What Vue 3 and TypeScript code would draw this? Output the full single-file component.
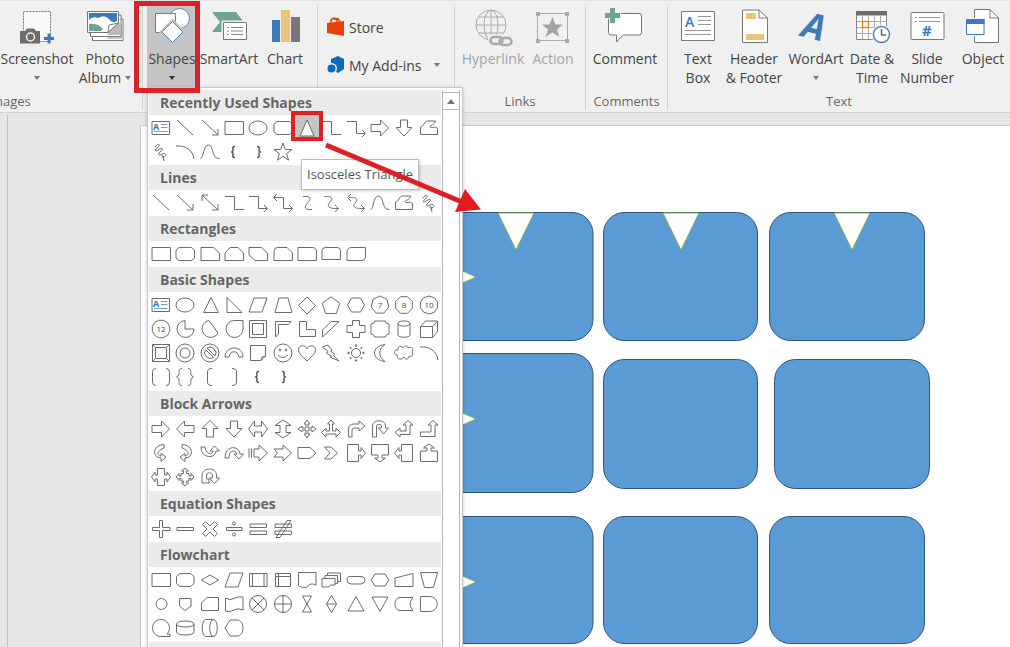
<script setup lang="ts">
interface Shape {
  name: string
  d: string
  text?: string
  kind?: 'textbox' | 'active' | 'heavy'
}
interface Section {
  title: string
  shapes: Shape[]
}
interface Tri {
  points: string
}
interface Card {
  x: number
  y: number
  w: number
  h: number
}

const circle = (x: number, y: number, r: number): string =>
  `M${x - r} ${y}a${r} ${r} 0 1 0 ${2 * r} 0a${r} ${r} 0 1 0 ${-2 * r} 0Z`
const oval = (x: number, y: number, rx: number, ry: number): string =>
  `M${x - rx} ${y}a${rx} ${ry} 0 1 0 ${2 * rx} 0a${rx} ${ry} 0 1 0 ${-2 * rx} 0Z`
const poly = (n: number, r: number, rot = -90, cx = 12, cy = 12): string =>
  'M' +
  Array.from({ length: n }, (_, i) => {
    const a = ((rot + (360 / n) * i) * Math.PI) / 180
    return `${(cx + r * Math.cos(a)).toFixed(2)} ${(cy + r * Math.sin(a)).toFixed(2)}`
  }).join('L') +
  'Z'
const star = (n: number, r: number, inner: number, cy = 12): string =>
  'M' +
  Array.from({ length: n * 2 }, (_, i) => {
    const a = ((-90 + (180 / n) * i) * Math.PI) / 180
    const q = i % 2 ? inner : r
    return `${(12 + q * Math.cos(a)).toFixed(2)} ${(cy + q * Math.sin(a)).toFixed(2)}`
  }).join('L') +
  'Z'
const s = (name: string, d: string, text?: string): Shape => ({ name, d, text })

const textBox: Shape = { name: 'Text Box', d: 'M3 5.500H20.500V18.500H3Z', kind: 'textbox' }
const line = s('Line', 'M4 4L20 19')
const arrow = s('Arrow', 'M4 4L20 19M20 13V19H14')
const rect = s('Rectangle', 'M3 5.500H21.500V18.500H3Z')
const ellipse = s('Oval', oval(12, 12, 9, 7))
const round = s('Rounded Rectangle', 'M6 5.500H18.500L21.500 8V16L18.500 18.500H6L3 16V8Z')
const elbow = s('Elbow Connector', 'M3 5.500H12.500V18.500H22')
const elbowArrow = s('Elbow Arrow Connector', 'M3 5.500H12.500V17.500H21M18 14L21.500 17.500L18 21')
const freeform = s('Freeform', 'M3.500 18.500V11C7 11 7 5 10.500 5H18.500C18 9 13 9 13 11C14 13 20.500 9 20.500 13V18.500Z')
const scribble = s('Scribble', 'M6 7C9 3 12 4 9 7C5 11 6 12 9 10C14 7 15 9 11 12C8 15 10 16 13 14C17 12 18 16 15 17C12 18 13 14 14 16L15 21')
const arc = s('Arc', 'M3 6C12 5 20 10 21 19')
const curve = s('Curve', 'M2.500 18.500C6 18 5 5 10.500 5S13 19 21.500 18.500')
const leftBrace: Shape = {
  name: 'Left Brace',
  d: 'M13 6.500C10 6.500 11 8 11 10S10.500 12 9 12C10.500 12 11 12 11 14S10 17.500 13 17.500',
  kind: 'heavy',
}
const rightBrace: Shape = {
  name: 'Right Brace',
  d: 'M11 6.500C14 6.500 13 8 13 10S13.500 12 15 12C13.500 12 13 12 13 14S14 17.500 11 17.500',
  kind: 'heavy',
}
const rightArrow = s('Right Arrow', 'M3 8.500H12.500V4L20.500 12L12.500 20V15.500H3Z')
const downArrow = s('Down Arrow', 'M8.500 4V11.500H4L12 20L20 11.500H15.500V4Z')
const parallelogram = s('Parallelogram', 'M8 5H21L16 19H3Z')

const sections: Section[] = [
  {
    title: 'Recently Used Shapes',
    shapes: [
      textBox, line, arrow, rect, ellipse, round,
      { name: 'Isosceles Triangle', d: 'M12 4L19 20H5Z', kind: 'active' },
      elbow, elbowArrow, rightArrow, downArrow, freeform,
      scribble, arc, curve, leftBrace, rightBrace,
      s('5-Point Star', star(5, 9.5, 3.8, 12.5)),
    ],
  },
  {
    title: 'Lines',
    shapes: [
      line, arrow,
      s('Double Arrow', 'M4 4L20 19M20 13V19H14M4 10V4H10'),
      elbow, elbowArrow,
      s('Elbow Double-Arrow', 'M3 6.500H12.500V17.500H21M18 14L21.500 17.500L18 21M6 3L2.500 6.500L6 10'),
      s('Curved Connector', 'M8 5.500C17 5 16 8 12.500 12S9 19 17 18.500'),
      s('Curved Arrow Connector', 'M5 5.500C14 5 14 8 11 11S8 18 19 17.500M16 14L19.500 17.500L16 21'),
      s('Curved Double-Arrow', 'M5 6.500C14 6 14 9 11 12S10 18 20 17.500M17 14L20.500 17.500L17 21M7 3L3.500 6.500L7 10'),
      curve, freeform, scribble,
    ],
  },
  {
    title: 'Rectangles',
    shapes: [
      rect, round,
      s('Snip Single Corner', 'M3 5.500H15.500L21.500 11V18.500H3Z'),
      s('Snip Same Side', 'M8 5.500H16L21.500 11V18.500H3V11Z'),
      s('Snip Diagonal', 'M3 5.500H15.500L21.500 11V18.500H9L3 13Z'),
      s('Snip and Round', 'M3 18.500V9Q3 5.500 7 5.500H16L21.500 11V18.500Z'),
      s('Round Single Corner', 'M3 5.500H17Q21.500 5.500 21.500 10V18.500H3Z'),
      s('Round Same Side', 'M3 17.500V8.500Q3 5.500 7 5.500H18Q21.500 5.500 21.500 8.500V17.500Z'),
      s('Round Diagonal', 'M3 18.500V10Q3 5.500 8 5.500H21.500V14Q21.500 18.500 17 18.500Z'),
    ],
  },
  {
    title: 'Basic Shapes',
    shapes: [
      textBox, ellipse,
      s('Triangle', 'M13 4.500L20.500 19.500H5.500Z'),
      s('Right Triangle', 'M5 4.500V19.500H20Z'),
      parallelogram,
      s('Trapezoid', 'M8 5H17L21 19.500H4Z'),
      s('Diamond', 'M12 4L20.500 12.500L12 21L3.500 12.500Z'),
      s('Pentagon', poly(5, 9.2, -90, 12, 13)),
      s('Hexagon', 'M7.500 5H16.500L20.500 12L16.500 19H7.500L3.500 12Z'),
      s('Heptagon', poly(7, 9), '7'),
      s('Octagon', poly(8, 9, 22.5), '8'),
      s('Decagon', poly(10, 9), '10'),
      s('Dodecagon', poly(12, 9, 15), '12'),
      s('Pie', 'M12 3.500A8.500 8.500 0 1 0 21 12H12Z'),
      s('Chord', 'M11 3.500A8.500 8.500 0 1 0 20 16Z'),
      s('Teardrop', 'M21 3.500H12A8.500 8.500 0 1 0 21 12Z'),
      s('Frame', 'M3.500 3.500H20.500V20.500H3.500ZM6.500 6.500H17.500V17.500H6.500Z'),
      s('Half Frame', 'M4.500 4.500H20L17.500 7.500H7.500V17L4.500 20Z'),
      s('L-Shape', 'M4.500 4.500H11.500V12.500H20.500V19.500H4.500Z'),
      s('Diagonal Stripe', 'M3.500 13L12 4.500H20L3.500 20Z'),
      s('Cross', 'M8.500 3.500H15.500V8.500H21V15.500H15.500V20.500H8.500V15.500H3V8.500H8.500Z'),
      s('Plaque', 'M6.500 4H17.500Q17.500 7 21 7V17Q17.500 17 17.500 20H6.500Q6.500 17 3 17V7Q6.500 7 6.500 4Z'),
      s('Can', 'M6 6.500V18C6 21 18 21 18 18V6.500M6 6.500C6 3 18 3 18 6.500S6 10 6 6.500'),
      s('Cube', 'M3.500 9.500L8.500 4H20.500V14.500L15.500 20.500H3.500ZM3.500 9.500H15.500V20.500M15.500 9.500L20.500 4'),
      s('Bevel', 'M3.500 3.500H20.500V20.500H3.500ZM6.500 6.500H17.500V17.500H6.500ZM3.500 3.500L6.500 6.500M20.500 3.500L17.500 6.500M3.500 20.500L6.500 17.500M20.500 20.500L17.500 17.500'),
      s('Donut', circle(12, 12, 9) + circle(12, 12, 5)),
      s('No Symbol', circle(12, 12, 9) + 'M7.500 8.500L15.500 16.500A5.800 5.800 0 0 1 7.500 8.500ZM9 7L17 15A5.800 5.800 0 0 0 9 7Z'),
      s('Block Arc', 'M3 16C3 4 21 4 21 16H17C16 9 8 9 7 16Z'),
      s('Folded Corner', 'M4.500 4.500H19.500V15L15 19.500H4.500ZM15 19.500L16 16L19.500 15'),
      s('Smiley Face', circle(12, 12, 9) + circle(9, 9, 1) + circle(15, 9, 1) + 'M7 14Q12 19 17 14'),
      s('Heart', 'M12 20C7 15 3.500 13 3.500 8.500C4 3 11 4 12 8C13 4 20 3 20.500 8.500C20.500 13 17 15 12 20Z'),
      s('Lightning Bolt', 'M3.500 6L9 4L13 9L11.500 10L16 13.500L14.500 14.500L20 20L11 16L12.500 15L7.500 12L9 10.500Z'),
      s('Sun', circle(12, 12, 4.5) + 'M11 5L12 3.500L13 5ZM11 19L12 20.500L13 19ZM5 11L3.500 12L5 13ZM19 11L20.500 12L19 13ZM6 6.500L6.500 8M6 6.500L7.500 7M18 6.500L17.500 8M18 6.500L16.500 7M6 17.500L6.500 16M6 17.500L7.500 17M18 17.500L17.500 16M18 17.500L16.500 17'),
      s('Moon', 'M17 3.500C3 5 3 19 17 20.500C10 16 10 8 17 3.500Z'),
      s('Cloud', 'M5 14C1 13 2 8 6 9C5 5 10 4 11 7C13 4 15 4 16 7C20 5 22 8 20 11C22 14 19 17 17 15C17 19 13 19 12 16C9 20 5 18 5 14Z'),
      arc,
      s('Double Bracket', 'M7 3.500Q3.500 3.500 3.500 7V17Q3.500 20.500 7 20.500M17 3.500Q20.500 3.500 20.500 7V17Q20.500 20.500 17 20.500'),
      s('Double Brace', 'M9 3.500C5 3.500 6.500 7 6 10L3.500 12L6 14C6.500 17 5 20.500 9 20.500M15 3.500C19 3.500 17.500 7 18 10L20.500 12L18 14C17.500 17 19 20.500 15 20.500'),
      s('Left Bracket', 'M14 3.500Q9.500 3.500 9.500 7V17Q9.500 20.500 14 20.500'),
      s('Right Bracket', 'M10 3.500Q14.500 3.500 14.500 7V17Q14.500 20.500 10 20.500'),
      leftBrace, rightBrace,
    ],
  },
  {
    title: 'Block Arrows',
    shapes: [
      rightArrow,
      s('Left Arrow', 'M21 8.500H11.500V4L3.500 12L11.500 20V15.500H21Z'),
      s('Up Arrow', 'M8.500 20V11.500H4L12 3.500L20 11.500H15.500V20Z'),
      downArrow,
      s('Left-Right Arrow', 'M2.500 12L8.500 4V9H15.500V4L21.500 12L15.500 20V15H8.500V20Z'),
      s('Up-Down Arrow', 'M12 3L20 8.500H15V15.500H20L12 21L4 15.500H9V8.500H4Z'),
      s('Quad Arrow', 'M12 3L15 7H13V11H17V9L21 12L17 15V13H13V17H15L12 21L9 17H11V13H7V15L3 12L7 9V11H11V7H9Z'),
      s('Left-Right-Up Arrow', 'M12 3L15.500 7H13.500V14H17V11L21.500 15.500L17 20V17H7V20L2.500 15.500L7 11V14H10.500V7H8.500Z'),
      s('Bent Arrow', 'M4.500 20V12Q4.500 7 10 7H15V4L21 9L15 14V11H10Q8 11 8 13V20Z'),
      s('U-Turn Arrow', 'M4.500 20V9C4.500 2 17.500 2 17.500 9V11H20.500L15.500 17L10.500 11H13.500V9C13.500 7 8.500 7 8.500 9V20Z'),
      s('Left-Up Arrow', 'M3 15.500L8 11V14H14V8H11L16 3.500L21 8H18V17.500H8V20Z'),
      s('Bent-Up Arrow', 'M3.500 15H14V8H11L16 3.500L21 8H18V19.500H3.500Z'),
      s('Curved Right Arrow', 'M15 3.500C3 4 3 17 12 17V20.500L17 16L12 12.500V15C8 15 7 10 15 7Z'),
      s('Curved Left Arrow', 'M9 3.500C21 4 21 17 12 17V20.500L7 16L12 12.500V15C16 15 17 10 9 7Z'),
      s('Curved Up Arrow', 'M3 6C3 18 18 18 18 10H21.500L16.500 5L12 10H15C15 14 8 14 7 6Z'),
      s('Curved Down Arrow', 'M3 17C3 4 17 4 18 13H21.500L17 18L12 13H15C14 9 7 8 7 17Z'),
      s('Striped Right Arrow', 'M3 7.500V16.500M5.500 7.500V16.500M8 8H13V4L21.500 12L13 20V16H8Z'),
      s('Notched Right Arrow', 'M3 8H12V4L20.500 12L12 20V16H3L6.500 12Z'),
      s('Pentagon Arrow', 'M3 6.500H15L21 12L15 17.500H3Z'),
      s('Chevron', 'M5.500 6H12L18.500 12L12 18H5.500L11 12Z'),
      s('Right Arrow Callout', 'M3.500 3.500H14.500V10H17V6.500L21.500 12L17 17.500V14H14.500V20.500H3.500Z'),
      s('Down Arrow Callout', 'M3.500 3.500H20.500V14H14V17H17.500L12 21L6.500 17H10V14H3.500Z'),
      s('Left Arrow Callout', 'M20.500 3.500H9.500V10H7V6.500L2.500 12L7 17.500V14H9.500V20.500H20.500Z'),
      s('Up Arrow Callout', 'M3.500 20.500H20.500V10H14V7H17.500L12 3L6.500 7H10V10H3.500Z'),
      s('Left-Right Callout', 'M8.500 3.500H15.500V10H18V7L21.500 12L18 17V14H15.500V20.500H8.500V14H6V17L2.500 12L6 7V10H8.500Z'),
      s('Quad Arrow Callout', 'M12 3L15.500 6H13.500V8.500H16V11H18V8.500L21 12L18 15.500V13.500H16V16H13.500V18H15.500L12 21L8.500 18H10.500V16H8V13.500H6V15.500L3 12L6 8.500V11H8V8.500H10.500V6H8.500Z'),
      s('Circular Arrow', 'M4 18V10C5 2 18 2 18.500 10V13H21.500L16.500 18.500L11.500 13H14.500V10C14 7 9 7 8.500 10V14H11V18Z'),
    ],
  },
  {
    title: 'Equation Shapes',
    shapes: [
      s('Plus', 'M10.500 3.500H13.500V10.500H21V13.500H13.500V20.500H10.500V13.500H3.500V10.500H10.500Z'),
      s('Minus', 'M4 10.500H20.500V13.500H4Z'),
      s('Multiply', 'M4.500 7.500L7.500 4.500L12 9L16.500 4.500L19.500 7.500L15 12L19.500 16.500L16.500 19.500L12 15L7.500 19.500L4.500 16.500L9 12Z'),
      s('Division', 'M4.500 10.500H20V13.500H4.500Z' + circle(12, 6.5, 1.5) + circle(12, 17.5, 1.5)),
      s('Equal', 'M4 7H20.500V10.500H4ZM4 14H20.500V17.500H4Z'),
      s('Not Equal', 'M4 7H20.500V10.500H4ZM4 14H20.500V17.500H4ZM16 3.500H20L9 20.500H5Z'),
    ],
  },
  {
    title: 'Flowchart',
    shapes: [
      rect,
      s('Alternate Process', 'M7 5.500H17.500L21 8.500V15.500L17.500 18.500H7L3.500 15.500V8.500Z'),
      s('Decision', 'M12 7L20.500 12L12 17L3.500 12Z'),
      parallelogram,
      s('Predefined Process', 'M3.500 5.500H21V18.500H3.500ZM6.500 5.500V18.500M18 5.500V18.500'),
      s('Internal Storage', 'M4.500 5.500H19.500V18.500H4.500ZM7.500 5.500V18.500M4.500 8.500H19.500'),
      s('Document', 'M3.500 4.500H21V17Q15 14 12 19Q9 21 3.500 17.500Z'),
      s('Multidocument', 'M3 10.500H16V17Q11 16 9 19H3ZM6 10.500V7.500H18.500V15.500H16M8.500 7.500V5H21.500V13.500H18.500'),
      s('Terminator', 'M7 8.500H17Q21 8.500 21 12T17 16H7Q3 16 3 12T7 8.500Z'),
      s('Preparation', 'M7 6H17L21 12L17 18H7L3 12Z'),
      s('Manual Input', 'M3 10L21 5.500V18.500H3Z'),
      s('Manual Operation', 'M3.500 4.500H20.500L16.500 19.500H7.500Z'),
      s('Connector', circle(12.5, 12, 5.5)),
      s('Off-page Connector', 'M6.500 6.500H18V14L12 18.500L6.500 14Z'),
      s('Card', 'M3.500 11L9 5.500H20.500V18.500H3.500Z'),
      s('Punched Tape', 'M3.500 6Q8 9 12 6.500T21 5V18Q16 15.500 12 18T3.500 19Z'),
      s('Summing Junction', circle(12, 12, 8.5) + 'M6 6L18 18M18 6L6 18'),
      s('Or', circle(12, 12, 8.5) + 'M12 3.500V20.500M3.500 12H20.500'),
      s('Collate', 'M7.500 4H16.500L7.500 20H16.500Z'),
      s('Sort', 'M12.500 3.500L17.500 12L12.500 20.500L7.500 12ZM7.500 12H17.500'),
      s('Extract', 'M12 4.500L20 19H4Z'),
      s('Merge', 'M4 5H20L12 19.500Z'),
      s('Stored Data', 'M8 5.500H21Q15 12 21 18.500H8Q3 18 3 12T8 5.500Z'),
      s('Delay', 'M3.500 4.500H12C23 4.500 23 19.500 12 19.500H3.500Z'),
      s('Sequential Access', 'M12 20.500H21V18H18A8.500 8.500 0 1 0 12 20.500Z'),
      s('Magnetic Disk', 'M3.500 8V16C3.500 20 21 20 21 16V8M3.500 8C3.500 4 21 4 21 8S3.500 12 3.500 8'),
      s('Direct Access', 'M8 3.500H15.500C20.500 3.500 20.500 20.500 15.500 20.500H8C3 20.500 3 3.500 8 3.500M15.500 3.500C10.500 3.500 10.500 20.500 15.500 20.500'),
      s('Display', 'M3 12L8 4H15C23 4 23 20 15 20H8Z'),
    ],
  },
]

const cards: Card[] = [
  { x: 438, y: 212.5, w: 155, h: 128 },
  { x: 603.5, y: 212.5, w: 154, h: 128 },
  { x: 769.5, y: 212.5, w: 155, h: 128 },
  { x: 438, y: 353.5, w: 155, h: 139 },
  { x: 603.5, y: 359.5, w: 154, h: 129 },
  { x: 774.5, y: 359.5, w: 155, h: 129 },
  { x: 438, y: 516.5, w: 155, h: 127 },
  { x: 603.5, y: 516.5, w: 154, h: 127 },
  { x: 769.5, y: 516.5, w: 155, h: 127 },
]
const notches: Tri[] = [
  { points: '498,213 534,213 516,250' },
  { points: '663,213 699,213 681,250' },
  { points: '834,213 870,213 852,250' },
  { points: '438,260 438,294 476,277' },
  { points: '438,402 438,436 476,419' },
  { points: '438,565 438,599 476,582' },
]
</script>

<template>
  <div class="app">
    <header class="ribbon">
      <section class="group images">
        <div class="tools">
          <button class="tool w74">
            <svg viewBox="15 7 44 40" fill="none">
              <rect x="23.500" y="11.500" width="27" height="30" fill="#fafafa" stroke="#777" stroke-dasharray="2 1" />
              <path d="M20 31H25L27 28.500H34L36 31H40V43.500H20Z" fill="#6d6d6d" />
              <circle cx="30.500" cy="37" r="4" stroke="#eee" stroke-width="1.500" />
              <path d="M44 38.500H54M49 33.500V43.500" stroke="#3f7ab8" stroke-width="3" />
            </svg>
            <span>Screenshot</span><i class="caret" />
          </button>
          <button class="tool w62">
            <svg viewBox="83 7 44 40" fill="none">
              <path d="M92.500 19H123V40.500H92.500Z" fill="#fff" stroke="#777" />
              <path d="M106 39L122 24V39Z" fill="#c8c8c8" />
              <path d="M90.500 15H121V36.500H90.500Z" fill="#fff" stroke="#777" />
              <path d="M107 35L116 24L120 23V35Z" fill="#bbb" />
              <path d="M87.500 11.500H118.500V23L108 32.500H87.500Z" fill="#fff" stroke="#777" />
              <path d="M89 13H117V21Q112 24 109 19Q104 14 98 18Q92 16 89 20Z" fill="#3f7ab8" />
              <path d="M89 24Q98 23 103 29L101 31H89Z" fill="#6da58f" />
              <path d="M108 32.500L109 25L118.500 23Z" fill="#fff" stroke="#777" />
            </svg>
            <span>Photo</span><span class="with-caret">Album<i class="caret small" /></span>
          </button>
        </div>
        <h2>Images</h2>
      </section>

      <section class="group illustrations">
        <div class="tools">
          <button class="tool w50 selected" aria-haspopup="true" aria-expanded="true">
            <svg viewBox="149 7 44 40" fill="#fff" stroke="#5683b5">
              <circle cx="178.500" cy="18.500" r="10" />
              <path d="M154.500 13.500H174.500V32.500H154.500Z" />
              <path d="M171.500 18.500L185 32L171.500 45.500L158 32Z" fill="#c5c5c5" stroke="none" />
              <path d="M171.500 21.500L182 32L171.500 42.500L161 32Z" />
            </svg>
            <span>Shapes</span><i class="caret dark" />
          </button>
          <button class="tool w60">
            <svg viewBox="207 7 44 40" fill="none">
              <path d="M212 12H236L243 21V32H212L220 22Z" fill="#6da58f" />
              <path d="M221.500 20.500H248V41H221.500Z" fill="#f0f0f0" />
              <path d="M223.500 22.500H246.500V39.500H223.500Z" fill="#fff" stroke="#777" />
              <path d="M227 27.500H229M231 27.500H243M227 31H229M231 31H243M227 34.500H229M231 34.500H243" stroke="#888" />
            </svg>
            <span>SmartArt</span>
          </button>
          <button class="tool w52">
            <svg viewBox="263 7 44 40">
              <path d="M272 20H280V42H272Z" fill="#3f7ab8" />
              <path d="M281 10H290V42H281Z" fill="#eac47a" />
              <path d="M291 17H300V42H291Z" fill="#777" />
            </svg>
            <span>Chart</span>
          </button>
        </div>
      </section>

      <section class="group addins">
        <button class="row-tool">
          <svg viewBox="326 17 20 20" fill="none">
            <path d="M327 23L344 21V36L327 33Z" fill="#e8400c" />
            <path d="M331 24V20Q334 16 337 20V23M334 20Q338 16 340 22" stroke="#e8400c" stroke-width="1.500" />
          </svg>
          <span>Store</span>
        </button>
        <button class="row-tool">
          <svg viewBox="326 55 20 20">
            <path d="M331 59L338 56L344 59V69L338 73L331 69Z" fill="#0f6cbd" />
            <circle cx="331.500" cy="68.500" r="5.500" fill="#f0f0f0" />
            <circle cx="331.500" cy="68.500" r="4" fill="#0f6cbd" />
          </svg>
          <span>My Add-ins</span><i class="caret gap" />
        </button>
      </section>

      <section class="group links">
        <div class="tools">
          <button class="tool w64" disabled>
            <svg viewBox="471 7 44 40" fill="none" stroke="#aaa">
              <circle cx="491" cy="25" r="15" />
              <ellipse cx="491" cy="25" rx="7" ry="15" />
              <path d="M491 10V40M476 25H506M479 17H503M479 33H503" />
              <path d="M488 34.500H514V47H488Z" fill="#f0f0f0" stroke="none" />
              <rect x="490.500" y="37" width="12" height="7" rx="3.500" stroke-width="2.500" />
              <rect x="499.500" y="38" width="12" height="7" rx="3.500" stroke-width="2.500" />
            </svg>
            <span>Hyperlink</span>
          </button>
          <button class="tool w56" disabled>
            <svg viewBox="531 7 44 40" fill="none" stroke="#aaa">
              <path d="M537.500 13.500H567.500V40.500H537.500Z" />
              <path d="M552.500 17L555.500 24.500H563L557 29.500L559.500 37L552.500 32.500L545.500 37L548 29.500L542 24.500H549.500Z" fill="#a3a3a3" stroke="none" />
              <path d="M536 12H540V16H536ZM565 12H569V16H565ZM536 39H540V43H536ZM565 39H569V43H565Z" fill="#aaa" stroke="none" />
            </svg>
            <span>Action</span>
          </button>
        </div>
        <h2>Links</h2>
      </section>

      <section class="group comments">
        <div class="tools">
          <button class="tool w72">
            <svg viewBox="603 6 44 40" fill="none">
              <path d="M611 12.500H639Q641.500 12.500 641.500 15V31.500Q641.500 34 639 34H623L616.500 41V34H611Q608.500 34 608.500 31.500V15Q608.500 12.500 611 12.500Z" fill="#fff" stroke="#777" />
              <path d="M604 14.500H621M612.500 6V23" stroke="#f0f0f0" stroke-width="7" />
              <path d="M605 14.500H620M612.500 7V22" stroke="#6da58f" stroke-width="5" />
            </svg>
            <span>Comment</span>
          </button>
        </div>
        <h2>Comments</h2>
      </section>

      <section class="group text">
        <div class="tools">
          <button class="tool w48">
            <svg viewBox="676 7 44 40" fill="none">
              <path d="M681.500 11.500H714.500V40.500H681.500Z" fill="#fff" stroke="#777" />
              <text x="685" y="27" class="icon-a">A</text>
              <path d="M698 16.500H711M698 20.500H711M698 24.500H711M685 30.500H711M685 34.500H711" stroke="#999" />
            </svg>
            <span>Text</span><span>Box</span>
          </button>
          <button class="tool w64">
            <svg viewBox="732 7 44 40" fill="none">
              <path d="M742.500 10H759L767.500 18V42.500H742.500Z" fill="#fff" stroke="#777" />
              <path d="M759 10V18H767.500" stroke="#777" />
              <path d="M746 13H756V19H746ZM746 34H764V40H746Z" fill="#eac47a" />
            </svg>
            <span>Header</span><span>&amp; Footer</span>
          </button>
          <button class="tool w60">
            <svg viewBox="794 7 44 40" overflow="visible">
              <text x="800" y="36" transform="rotate(14 800 36)" class="icon-wordart">A</text>
            </svg>
            <span>WordArt</span><i class="caret" />
          </button>
          <button class="tool w52">
            <svg viewBox="850 7 44 40" fill="none">
              <path d="M856.500 12H886.500V39.500H856.500Z" fill="#fff" stroke="#888" />
              <path d="M856 11H887V15.500H856Z" fill="#6d6d6d" />
              <path d="M862.500 16V39M868.500 16V39M874.500 16V39M880.500 16V39M857 21.500H886M857 27.500H886M857 33.500H886" stroke="#aaa" />
              <path d="M862.500 21.500H868.500V27.500H862.500Z" stroke="#e08a2c" stroke-width="1.500" />
              <circle cx="881.500" cy="34.500" r="10" fill="#f0f0f0" />
              <circle cx="881.500" cy="34.500" r="8" fill="#fff" stroke="#5683b5" stroke-width="1.500" />
              <path d="M881.500 29V35H886" stroke="#666" stroke-width="1.500" />
            </svg>
            <span>Date &amp;</span><span>Time</span>
          </button>
          <button class="tool w58">
            <svg viewBox="905 7 44 40" fill="none">
              <rect x="911" y="12.500" width="33" height="27" rx="1" fill="#fff" stroke="#777" />
              <path d="M915 17.500H917M919 17.500H940M915 21.500H917M919 21.500H940" stroke="#999" />
              <text x="922" y="36" class="icon-hash">#</text>
            </svg>
            <span>Slide</span><span>Number</span>
          </button>
          <button class="tool w54">
            <svg viewBox="961 7 44 40" fill="none">
              <path d="M974.500 9.500H990L998.500 18V42.500H974.500Z" fill="#fff" stroke="#777" />
              <path d="M990 9.500V18H998.500" stroke="#777" />
              <path d="M965 18H985V36H965Z" fill="#f0f0f0" />
              <path d="M966.500 19.500H984V34.500H966.500Z" fill="#fff" stroke="#3f7ab8" />
              <path d="M966 19H984.500V24H966Z" fill="#3f7ab8" />
            </svg>
            <span>Object</span>
          </button>
        </div>
        <h2>Text</h2>
      </section>
    </header>

    <main class="workspace">
      <div class="thumbs" />
      <div class="slide" />
    </main>

    <svg class="canvas" aria-hidden="true">
      <rect v-for="(c, i) in cards" :key="i" :x="c.x" :y="c.y" :width="c.w" :height="c.h" rx="21" class="card" />
      <polygon v-for="(n, i) in notches" :key="'n' + i" :points="n.points" class="notch" />
    </svg>

    <div class="menu" aria-label="Shapes">
      <div class="gallery">
        <section v-for="sec in sections" :key="sec.title">
          <h3>{{ sec.title }}</h3>
          <div class="cells" :class="{ tall: sec.shapes.length > 24 }">
            <button
              v-for="(sh, i) in sec.shapes"
              :key="i"
              class="cell"
              :class="sh.kind"
              :aria-label="sh.name"
            >
              <svg viewBox="0 0 24 24">
                <path :d="sh.d" />
                <text v-if="sh.text" x="12" y="15" class="num">{{ sh.text }}</text>
                <template v-if="sh.kind === 'textbox'">
                  <text x="4" y="14" class="mini-a">A</text>
                  <path d="M12 8.500H18.500M12 11.500H18.500M5 15.500H18.500" class="blue" />
                </template>
              </svg>
            </button>
          </div>
        </section>
        <div class="next-header" />
      </div>
      <div class="scroll">
        <button aria-label="Scroll up"><i /></button>
      </div>
    </div>

    <div class="tooltip" role="tooltip">Isosceles Triangle</div>

    <div class="mark" />
    <svg class="canvas" aria-hidden="true">
      <path d="M326 145L462 202" stroke="#dc2025" stroke-width="5" fill="none" />
      <path d="M481 209.500L465 189L455 212Z" fill="#e51a20" />
    </svg>
  </div>
</template>

<style>
body {
  margin: 0;
  overflow: hidden;
}
</style>

<style scoped>
.app {
  position: relative;
  display: flex;
  flex-direction: column;
  height: 100vh;
  overflow: hidden;
  background: #e6e6e6;
  color: #444;
  font-family: "Open Sans", "Noto Sans", sans-serif;
  font-size: 14px;
  line-height: 19px;
}
button {
  margin: 0;
  padding: 0;
  border: 0;
  background: none;
  color: inherit;
  font: inherit;
}
.ribbon {
  display: flex;
  flex: none;
  padding: 4px 0 2px;
  border-top: 1px solid #e2e2e2;
  border-bottom: 1px solid #d2d2d2;
  background: #f0f0f0;
}
.group {
  display: flex;
  flex-direction: column;
  flex: none;
  box-sizing: border-box;
  height: 105px;
  border-right: 1px solid #d4d4d4;
}
.tools {
  display: flex;
  flex: 1;
}
.images {
  width: 267px;
  margin-left: -124px;
}
.images .tools {
  justify-content: flex-end;
  padding-right: 6px;
}
.illustrations {
  width: 175px;
}
.illustrations .tools {
  padding-left: 4px;
}
.illustrations .w60 {
  margin-left: 2px;
}
.addins {
  width: 137px;
  gap: 18px;
  padding: 12px 0 0 8px;
}
.links {
  width: 131px;
}
.links .tools,
.text .tools {
  padding-left: 6px;
}
.comments {
  width: 82px;
}
.comments .tools {
  padding-left: 3px;
}
.text {
  flex: 1;
  border-right: 0;
}
h2 {
  margin: 0;
  color: #666;
  font-size: 13px;
  font-weight: 400;
  line-height: 17px;
  text-align: center;
}
.tool {
  display: flex;
  flex-direction: column;
  align-items: center;
  height: 84px;
  padding-top: 2px;
  white-space: nowrap;
}
.tool svg {
  flex: none;
  width: 44px;
  height: 40px;
  margin-bottom: 2px;
}
.tool:disabled {
  color: #a6a6a6;
}
.selected {
  background: #c5c5c5;
}
.w48 { width: 48px; }
.w50 { width: 50px; }
.w52 { width: 52px; }
.w54 { width: 54px; }
.w56 { width: 56px; }
.w58 { width: 58px; }
.w60 { width: 60px; }
.w62 { width: 62px; }
.w64 { width: 64px; }
.w72 { width: 72px; }
.w74 { width: 74px; }
.caret {
  width: 0;
  height: 0;
  margin-top: 8px;
  border: 3px solid transparent;
  border-top: 4px solid #777;
  border-bottom: 0;
}
.caret.dark {
  border-top-color: #333;
}
.caret.small,
.caret.gap {
  margin: 0 0 0 4px;
}
.caret.gap {
  margin-left: 12px;
}
.with-caret {
  display: flex;
  align-items: center;
}
.row-tool {
  display: flex;
  align-items: center;
  height: 20px;
}
.row-tool svg {
  width: 20px;
  height: 20px;
  margin-right: 3px;
}
.icon-a {
  fill: #3f7ab8;
  font-size: 14px;
  font-weight: 600;
}
.icon-wordart {
  fill: #3f7ab8;
  font-size: 36px;
  font-style: italic;
  font-weight: 700;
}
.icon-hash {
  fill: #3f7ab8;
  font-size: 15px;
  font-weight: 700;
}
.workspace {
  display: flex;
  flex: 1;
}
.thumbs {
  width: 7px;
  margin-top: 2px;
  border-right: 1px solid #c0c0c0;
}
.slide {
  flex: 1;
  margin: 12px 0 0 132px;
  border: 1px solid #c8c8c8;
  border-width: 1px 0 0 1px;
  background: #fff;
}
.canvas {
  position: absolute;
  inset: 0;
  width: 100%;
  height: 100%;
  pointer-events: none;
}
.card {
  fill: #5b9bd5;
  stroke: #2f5579;
}
.notch {
  fill: #fff;
  stroke: #7fb356;
}
.menu {
  position: absolute;
  top: 87px;
  left: 147px;
  display: flex;
  box-sizing: border-box;
  width: 316px;
  padding: 2px 2px 0 1px;
  border: 1px solid #c6c6c6;
  background: #fff;
  box-shadow: 0 1px 4px rgba(0, 0, 0, 0.2);
}
.gallery {
  width: 292px;
}
h3 {
  margin: 0;
  padding-left: 11px;
  background: #ebebeb;
  color: #666;
  font-size: 14px;
  font-weight: 700;
  line-height: 25px;
}
.next-header {
  height: 25px;
  background: #ebebeb;
}
.cells {
  display: grid;
  grid-template-columns: repeat(12, 1fr);
  grid-auto-rows: 24px;
  padding: 1px 0;
}
.cells.tall {
  padding-bottom: 2px;
}
.cell {
  position: relative;
  display: grid;
  place-items: center;
}
.cell svg {
  width: 24px;
  height: 24px;
  fill: #fff;
  stroke: #6c6c6c;
}
.cell.heavy svg {
  stroke: #555;
  stroke-width: 1.5;
}
.cell text {
  stroke: none;
  fill: #444;
}
.cell .num {
  font-size: 8px;
  text-anchor: middle;
}
.cell .mini-a {
  fill: #3f6fa5;
  font-size: 9px;
  font-weight: 700;
}
.cell .blue {
  stroke: #7b9bc0;
}
.cell.active {
  z-index: 1;
}
.cell.active::before {
  content: "";
  position: absolute;
  inset: -5px -4px -1px;
  border: 4px solid #dc2025;
  background: #c5c5c5;
}
.cell.active svg {
  position: relative;
}
.scroll {
  width: 18px;
  margin-left: 1px;
  box-sizing: border-box;
  border: 1px solid #b4b4b4;
  border-width: 0 1px;
}
.scroll button {
  display: grid;
  place-items: center;
  width: 16px;
  height: 18px;
  margin-top: 2px;
  border: 1px solid #b4b4b4;
  border-width: 1px 0;
}
.scroll i {
  border: 4px solid transparent;
  border-top: 0;
  border-bottom: 5px solid #777;
}
.tooltip {
  position: absolute;
  top: 159px;
  left: 301px;
  padding: 5px;
  border: 1px solid #bdbdbd;
  background: #fff;
  color: #555;
  font-size: 13px;
  box-shadow: 1px 1px 3px rgba(0, 0, 0, 0.2);
}
.mark {
  position: absolute;
  top: 1px;
  left: 134px;
  box-sizing: border-box;
  width: 66px;
  height: 92px;
  border: 5px solid #d8232a;
}
</style>
